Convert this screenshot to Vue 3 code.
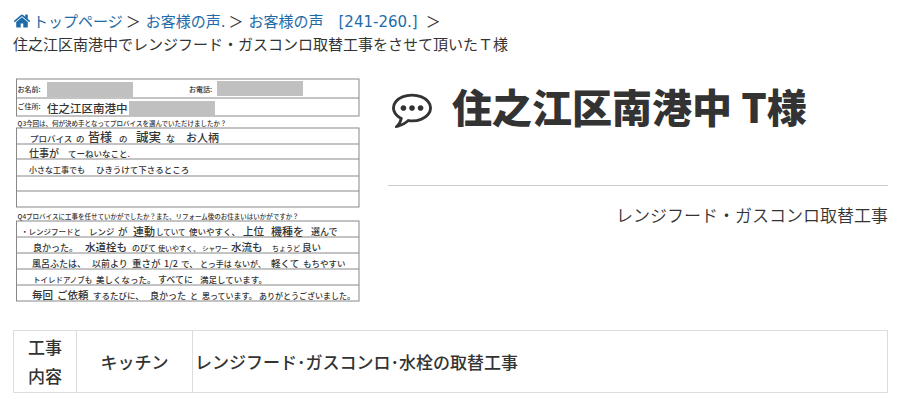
<script setup>
// [x, baseline, size, text] in the units of the sheet's viewBox
const printed = [
  [9, 34, 14, 'お名前:'],
  [352, 34, 14, 'お電話:'],
  [9, 68, 14, 'ご住所:'],
  [9, 102, 13, 'Q3今回は、何が決め手となってプロバイスを選んでいただけましたか？'],
  [9, 288, 13, 'Q4プロバイスに工事を任せていかがでしたか？また、リフォーム後のお住まいはいかがですか？']
];

const written = [
  [68, 76, 23, '住之江区南港中'],
  [34, 133, 17, 'プロバイス'],
  [126, 133, 17, 'の'],
  [150, 134, 24, '皆様'],
  [212, 133, 17, 'の'],
  [246, 134, 25, '誠実'],
  [306, 133, 18, 'な'],
  [346, 134, 22, 'お人柄'],
  [32, 164, 20, '仕事が'],
  [110, 164, 17, 'てーねいなこと.'],
  [32, 196, 16, '小さな工事でも'],
  [166, 196, 17, 'ひきうけて下さるところ'],
  [16, 320, 15, '・レンジフードと'],
  [152, 320, 17, 'レンジ'],
  [210, 320, 19, 'が'],
  [240, 321, 22, '連動'],
  [286, 320, 15, 'していて'],
  [352, 320, 17, '使いやすく、'],
  [460, 320, 21, '上位'],
  [516, 321, 22, '機種を'],
  [596, 320, 18, '選んで'],
  [40, 352, 18, '良かった。'],
  [144, 352, 21, '水道栓も'],
  [238, 352, 16, 'のびて'],
  [290, 352, 14, '使いやすく、'],
  [378, 352, 13, 'シャワー'],
  [436, 352, 21, '水流も'],
  [518, 352, 14, 'ちょうど'],
  [578, 352, 19, '良い'],
  [38, 384, 18, '風呂ふたは、'],
  [158, 384, 18, '以前より'],
  [238, 384, 19, '重さが'],
  [302, 384, 18, '1/2'],
  [336, 384, 17, 'で、'],
  [374, 384, 16, 'とっ手は'],
  [442, 384, 16, 'ないが、'],
  [516, 384, 19, '軽くて'],
  [580, 384, 17, 'もちやすい'],
  [40, 415, 15, 'トイレドアノブも'],
  [166, 415, 17, '美しくなった。'],
  [290, 415, 18, 'すべてに'],
  [374, 415, 17, '満足しています。'],
  [38, 447, 21, '毎回'],
  [88, 447, 21, 'ご依頼'],
  [160, 447, 17, 'するたびに、'],
  [274, 447, 18, '良かった'],
  [354, 447, 16, 'と'],
  [378, 447, 16, '思っています。'],
  [492, 447, 16, 'ありがとうございました。']
];

const boxes = [
  { top: 8, bottom: 82, rules: [46] },
  { top: 106, bottom: 264, rules: [138, 168, 202, 232] },
  { top: 292, bottom: 452, rules: [324, 356, 388, 420] }
];

const masks = [
  [68, 14],
  [408, 12],
  [232, 52]
];
</script>

<template>
  <main class="page">
    <nav class="breadcrumb">
      <a href="#"><svg class="home" viewBox="0 0 1792 1792"><path d="M1472 992v480q0 26-19 45t-45 19h-384v-384h-256v384h-384q-26 0-45-19t-19-45v-480q0-1 .5-3t.5-3l575-474 575 474q1 2 1 6zm223-69l-62 74q-8 9-21 11h-3q-13 0-21-7l-692-577-692 577q-12 8-24 7-13-2-21-11l-62-74q-8-10-7-23.5t11-21.5l719-599q32-26 76-26t76 26l244 204v-195q0-14 9-23t23-9h192q14 0 23 9t9 23v408l219 182q10 8 11 21.5t-7 23.5z" /></svg>トップページ</a>
      <span class="sep">＞</span>
      <a href="#">お客様の声.</a>
      <span class="sep">＞</span>
      <a href="#">お客様の声　[241-260.]</a>
      <span class="sep last">＞</span>
      <div>住之江区南港中でレンジフード・ガスコンロ取替工事をさせて頂いたＴ様</div>
    </nav>

    <section class="voice">
      <svg class="sheet" viewBox="0 0 700 460" role="img" aria-label="アンケート用紙">
        <g v-for="box in boxes" :key="box.top" class="rules">
          <rect x="7" :y="box.top" width="685" :height="box.bottom - box.top" />
          <path v-for="y in box.rules" :key="y" :d="`M7 ${y}H692`" />
        </g>
        <rect v-for="[x, y] in masks" :key="x" class="mask" :x="x" :y="y" width="172" height="30" />
        <text v-for="([x, y, size, text], i) in printed" :key="'p' + i" class="printed" :x="x" :y="y" :font-size="size">{{ text }}</text>
        <text v-for="([x, y, size, text], i) in written" :key="'w' + i" class="written" :x="x" :y="y" :font-size="size">{{ text }}</text>
      </svg>

      <div class="summary">
        <h1 class="title">
          <svg class="bubble" viewBox="0 0 1792 1792"><path d="M640 896q0 53-37.500 90.500t-90.500 37.500-90.500-37.500-37.500-90.500 37.500-90.500 90.500-37.500 90.500 37.500 37.500 90.500zm384 0q0 53-37.500 90.500t-90.500 37.500-90.500-37.500-37.500-90.500 37.500-90.500 90.500-37.500 90.500 37.500 37.500 90.500zm384 0q0 53-37.500 90.500t-90.500 37.500-90.500-37.500-37.500-90.500 37.500-90.500 90.500-37.500 90.500 37.500 37.500 90.500zm-512-512q-204 0-381.500 69.500t-282 187.500-104.500 255q0 112 71.500 213.500t201.500 175.500l87 50-27 96q-24 91-70 172 152-63 275-171l43-38 57 6q69 8 130 8 204 0 381.500-69.500t282-187.500 104.500-255-104.500-255-282-187.500-381.500-69.500zm896 512q0 174-120 321.500t-326 233-450 85.500q-70 0-145-8-198 175-460 242-49 14-114 22h-5q-15 0-27-10.500t-16-27.500v-1q-3-4-.5-12t2-10 4.500-9.500l6-9 7-8.500 8-9q7-8 31-34.500t34.500-38 31-39.500 32.500-51 27-59 26-76q-157-89-247.500-220t-90.500-281q0-174 120-321.500t326-233 450-85.500 450 85.500 326 233 120 321.500z" /></svg>
          <span>住之江区南港中 T様</span>
        </h1>
        <p class="subject">レンジフード・ガスコンロ取替工事</p>
      </div>
    </section>

    <table class="work">
      <tbody>
        <tr>
          <th class="label" scope="row">工事<br>内容</th>
          <td class="place">キッチン</td>
          <td>レンジフード･ガスコンロ･水栓の取替工事</td>
        </tr>
      </tbody>
    </table>
  </main>
</template>

<style>
body {
  background: #fff;
}
</style>

<style scoped>
.page {
  padding: 11px 23px 18px 13px;
  font-family: "Noto Sans CJK JP", sans-serif;
  color: #333;
}

.breadcrumb {
  font-family: "DejaVu Sans", "Noto Sans CJK JP", sans-serif;
  font-size: 15px;
  line-height: 23px;
}

.breadcrumb a {
  color: #1e6ba8;
  text-decoration: none;
}

.home {
  width: 18px;
  height: 18px;
  margin-right: 2px;
  vertical-align: -3px;
  fill: currentColor;
}

.sep {
  margin: 0 5px 0 3px;
}

.sep.last {
  margin-left: 8px;
}

.voice {
  display: grid;
  grid-template-columns: 3fr 4fr;
  margin-top: 18px;
}

.sheet {
  display: block;
  width: calc(100% - 25px);
}

.rules {
  fill: none;
  stroke: #888;
  stroke-width: 2;
}

.mask {
  fill: #c0c0c0;
}

.printed {
  fill: #333;
  font-weight: 500;
}

.written {
  fill: #333;
  font-weight: 500;
}

.title {
  display: flex;
  gap: 20px;
  margin: 0;
  padding: 2px 4px 50px;
  border-bottom: 1px solid #ccc;
  font-size: 40px;
  font-weight: 900;
  line-height: 58px;
}

.bubble {
  flex: none;
  width: 40px;
  height: 40px;
  margin-top: 11px;
  fill: currentColor;
}

.subject {
  margin: 14px 0 0;
  font-size: 17px;
  font-weight: 350;
  line-height: 29px;
  text-align: right;
}

.work {
  width: 100%;
  margin-top: 25px;
  border-collapse: collapse;
  font-size: 17px;
  font-weight: 500;
  line-height: 29px;
}

.work th,
.work td {
  padding: 1px 2px 2px;
  border: 1px solid #ddd;
  font-weight: 500;
}

.label {
  width: 58px;
}

.place {
  width: 111px;
  text-align: center;
}
</style>
